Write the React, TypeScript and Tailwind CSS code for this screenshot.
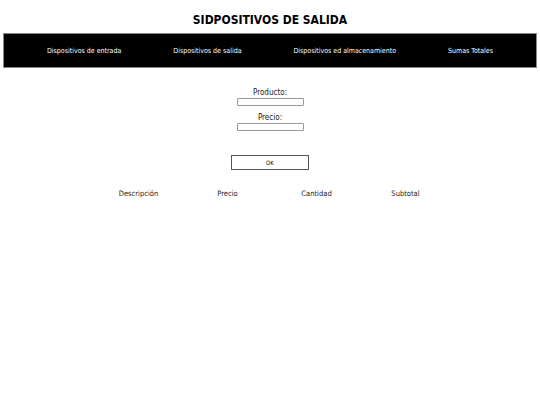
export default function App() {
  return (
    <div className="w-[540px] h-[405px] bg-white text-black" style={{ fontFamily: '"DejaVu Sans Condensed", "DejaVu Sans", sans-serif' }}>
      <h1 className="pt-[13px] h-[33px] text-center text-[12px] font-bold leading-[15px]">SIDPOSITIVOS DE SALIDA</h1>
      <nav className="mx-[3px] h-[35px] bg-black border border-[#888] flex items-center justify-around px-[17px] text-white text-[7px] leading-[9px] pt-[2px]">
        <span>Dispositivos de entrada</span>
        <span>Dispositivos de salida</span>
        <span>Dispositivos ed almacenamiento</span>
        <span>Sumas Totales</span>
      </nav>
      <div className="flex flex-col items-center pt-[20px]">
        <label className="text-[8px] leading-[9px] text-[#222]">Producto:</label>
        <input className="mt-[1px] w-[67px] h-[8px] border border-[#999] rounded-[1px]" />
        <label className="mt-[7px] text-[8px] leading-[9px] text-[#222]">Precio:</label>
        <input className="mt-[1px] w-[67px] h-[8px] border border-[#999] rounded-[1px]" />
        <button className="mt-[24px] w-[78px] h-[15px] border border-[#555] bg-white text-[6px]">OK</button>
      </div>
      <div className="mt-[18px] flex justify-center text-[7.5px] text-[#222] pl-[4px]">
        <div className="grid grid-cols-4 w-[356px] text-center">
          <span>Descripción</span>
          <span>Precio</span>
          <span>Cantidad</span>
          <span>Subtotal</span>
        </div>
      </div>
    </div>
  );
}
